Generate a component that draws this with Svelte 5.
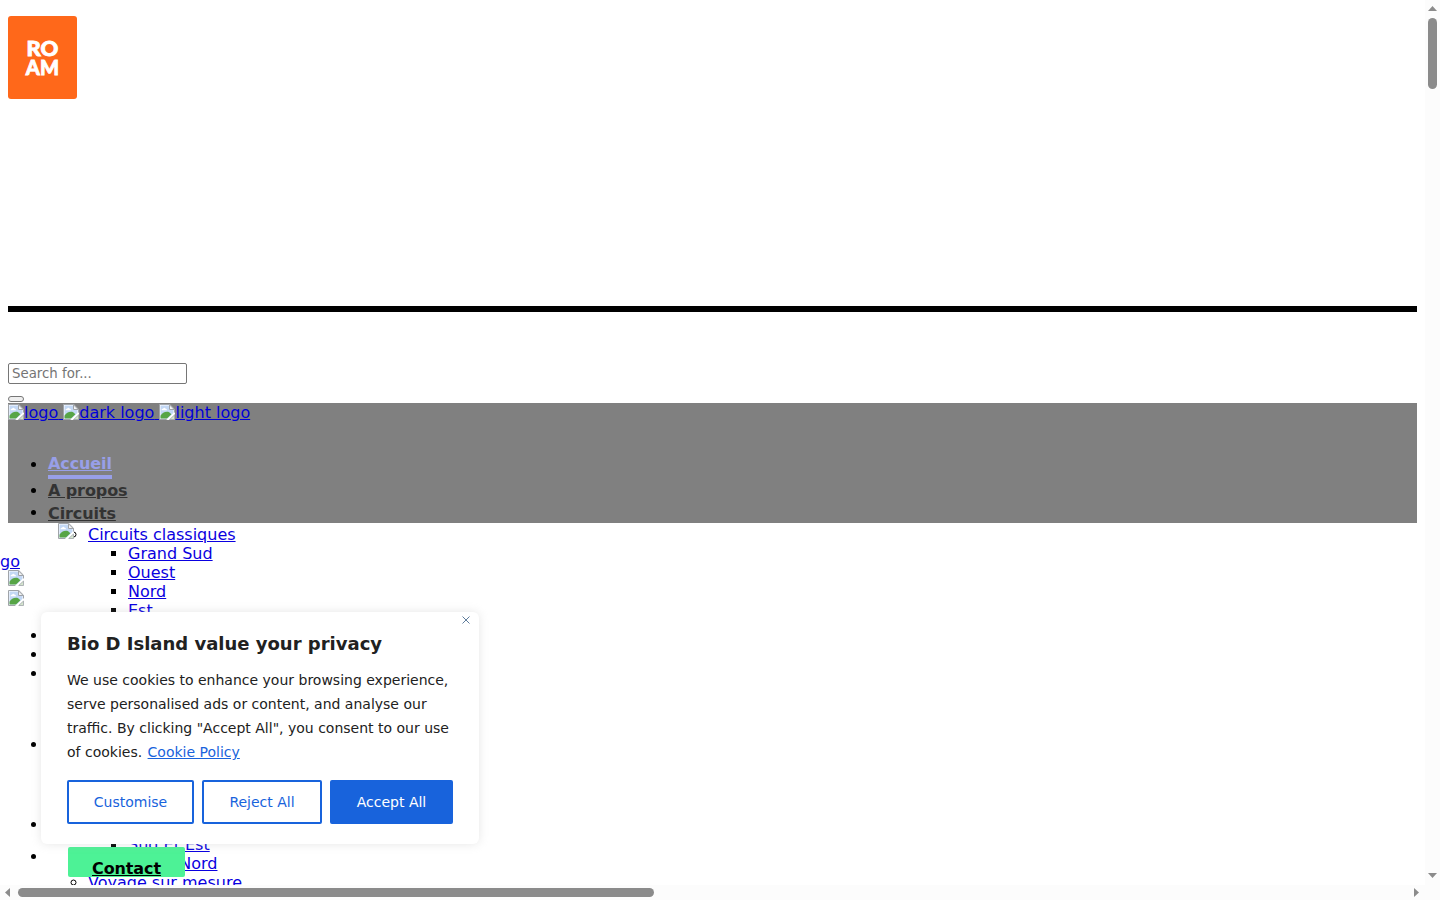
<script>
  const towns = ['Grand Sud', 'Ouest', 'Nord', 'Est'];
  const logos = ['logo', 'dark logo', 'light logo'];
  const offsets = [0, 19, 38, 109, 189, 221];
</script>

{#snippet broken()}
  <svg class="broken" width="16" height="16" viewBox="0 0 16 16" aria-hidden="true">
    <path d="M.5.5h10.3l4.7 4.7V15.5H.5z" fill="#fff" />
    <path d="M1.5 1.5h8.8v4.2h4.2v3L8.6 14.5H1.5z" fill="#c3d8f5" />
    <path d="M2.5 6.2c0-1.1.8-1.6 1.6-1.5.3-1.2 2.2-1.2 2.5.1.9 0 1.4.6 1.3 1.4z" fill="#fff" />
    <path d="M1.5 14.5v-2.8C3.4 8.6 7 7 10.2 8.3l2.2 2L8 14.5z" fill="#57a546" />
    <path d="M7.5 15.5H.5V.5h10.3l4.7 4.7v3.5" fill="none" stroke="#a0a4a9" />
    <path d="M10.5.8v4.7h4.7z" fill="#f4f5f6" stroke="#a0a4a9" />
    <path d="M7.3 16 16 8.2v1.9L9.8 16z" fill="#fff" />
    <path d="M10.7 15.5 15.5 11v4.5z" fill="#d5e6ce" stroke="#a0a4a9" stroke-width=".8" />
  </svg>
{/snippet}

<div class="screen">
  <main>
    <div class="roam"><span class="ro">RO</span><span class="am">AM</span></div>
    <div class="rule"></div>
    <input placeholder="Search for..." aria-label="Search" />
    <button class="submit" aria-label="Submit"></button>
    <header>
      <div class="logos">
        {#each logos as name, i}<a href="#top">{@render broken()}{name}{#if i < 2}&nbsp;{/if}</a>{/each}
      </div>
      <ul class="nav">
        <li class="home"><a href="#top">Accueil</a></li>
        <li class="about"><a href="#top">A propos</a></li>
        <li class="tours"><a href="#top">Circuits</a>
          <ul class="sub">
            <li><a href="#top">Circuits classiques</a>
              <ul>
                {#each towns as town}<li><a href="#top">{town}</a></li>{/each}
                <li class="later"><a href="#top">Sud Et Est</a></li>
                <li class="west"><a href="#top">Ouest Nord</a></li>
              </ul>
            </li>
            <li><a href="#top">Voyage sur mesure</a></li>
          </ul>
        </li>
      </ul>
    </header>

    <div class="float-icon">{@render broken()}</div>
    <a class="cut" href="#top">go</a>
    <div class="side-icons">{@render broken()}{@render broken()}</div>
    <div class="dots">
      {#each offsets as y}<i style="top:{y}px"></i>{/each}
    </div>
    <a class="contact" href="#top">Contact</a>

    <section class="card">
      <svg class="close" width="8" height="8" viewBox="0 0 8 8"><path d="M.5.5l7 7M7.5.5l-7 7" stroke="#5f7d9c" stroke-width="1" /></svg>
      <h2>Bio D Island value your privacy</h2>
      <p>We use cookies to enhance your browsing experience, serve personalised ads or content, and analyse our traffic. By clicking "Accept All", you consent to our use of cookies. <a href="#top">Cookie Policy</a></p>
      <div class="actions">
        <button class="b1">Customise</button>
        <button class="b2">Reject All</button>
        <button class="b3">Accept All</button>
      </div>
    </section>
  </main>
  <div class="vbar">
    <svg width="9" height="5"><path d="M0 5 4.5 0 9 5z" fill="#8b8b8b" /></svg>
    <div></div>
    <svg width="9" height="5"><path d="M0 0h9L4.5 5z" fill="#8b8b8b" /></svg>
  </div>
  <div class="hbar">
    <svg width="5" height="9"><path d="M5 0v9L0 4.5z" fill="#8b8b8b" /></svg>
    <div></div>
    <svg width="5" height="9"><path d="M0 0v9l5-4.5z" fill="#8b8b8b" /></svg>
  </div>
</div>

<style>
  :global(body) { margin: 0; background: #fff; overflow: hidden; }
  .screen {
    display: grid; grid-template: 885px 15px / 1425px 15px;
    width: 1440px; height: 900px; overflow: hidden;
    font: 16px "DejaVu Sans", sans-serif; color: #000;
  }
  main { position: relative; overflow: hidden; box-sizing: border-box; padding: 16px 8px 0; }
  a { color: #0000ee; text-decoration: underline; }
  header a { color: #0000d8; }
  .sub a, .cut { color: #0a00e0; }
  .roam {
    width: 69px; height: 83px; border-radius: 3px; background: #ff681a; color: #fff;
    display: flex; flex-direction: column; align-items: center; justify-content: center;
    font: 900 20px/19px Lato, sans-serif; -webkit-text-stroke: .8px #fff;
  }
  .ro { padding-top: 1px; transform: scaleX(1.1); }
  .am { letter-spacing: .2px; }
  .rule { height: 6px; width: 1409px; background: #000; margin-top: 207px; }
  input {
    display: block; box-sizing: border-box; width: 179px; height: 21px; margin: 51px 0 0;
    padding: 1px 3px; border: 1px solid #767676; border-radius: 2px; font: 13.333px "DejaVu Sans", sans-serif;
  }
  input::placeholder { color: #757575; }
  .submit {
    display: block; width: 16px; height: 6px; box-sizing: border-box; padding: 0; margin: 12px 0 1px;
    border: 1px solid #767676; border-radius: 3px; background: #efefef;
  }
  header { width: 1409px; height: 120px; background: #808080; }
  .logos { display: flex; height: 19px; margin-bottom: 33px; white-space: nowrap; }
  .logos .broken { vertical-align: top; margin-top: 1px; }
  .broken { display: inline-block; flex: none; }
  ul { margin: 0; padding-left: 40px; }
  .nav { list-style: disc; }
  .nav > li > a { font-weight: bold; color: #333; position: relative; letter-spacing: -.1px; }
  .nav > .home { height: 26px; }
  .nav > .home > a { color: #989fe8; display: inline-block; height: 21px; border-bottom: 4px solid #989fe8; top: -1px; }
  .nav > .about { height: 22px; }
  .nav > .tours > a { top: 1px; }
  .sub { list-style: circle; padding-top: 3px; }
  .sub ul { list-style: square; }
  .later { margin-top: 215px; }
  .west { word-spacing: -1px; }
  .float-icon { position: absolute; left: 58px; top: 523px; height: 16px; display: flex; }
  .cut { position: absolute; left: 0; top: 552px; }
  .side-icons { position: absolute; left: 8px; top: 570px; display: flex; flex-direction: column; gap: 4px; }
  .dots { position: absolute; left: 31px; top: 633px; }
  .dots i { position: absolute; width: 5px; height: 5px; border-radius: 50%; background: #000; }
  .contact {
    position: absolute; left: 68px; top: 847px; width: 117px; height: 30px; box-sizing: border-box;
    padding: 12px 0 0 24px; border-radius: 2px; background: #4df296; color: #000; font-weight: bold; letter-spacing: -.1px;
  }
  .card {
    position: absolute; left: 41px; top: 612px; width: 438px; height: 232px; box-sizing: border-box;
    padding: 20px 26px; border-radius: 6px; background: #fff; color: #212121; box-shadow: 0 0 10px #acabab4d;
  }
  .close { position: absolute; right: 9px; top: 4px; }
  h2 { margin: 0 0 12px; font: bold 18px/24px "DejaVu Sans", sans-serif; }
  p { margin: 0; font-size: 14px; line-height: 24px; }
  p a { color: #1863dc; margin-left: 1px; }
  .actions { display: flex; gap: 8px; margin-top: 16px; }
  .actions button {
    height: 44px; padding: 0; border: 2px solid #1863dc; border-radius: 2px; background: #fff;
    color: #1863dc; font: 14px "DejaVu Sans", sans-serif;
  }
  .b1 { width: 127px; }
  .b2 { width: 120px; }
  .actions .b3 { width: 123px; background: #1863dc; color: #fff; }
  .vbar {
    background: #fcfcfc; display: flex; flex-direction: column; align-items: center; padding: 6px 0 7px;
  }
  .vbar div { width: 9px; height: 71px; border-radius: 5px; background: #8b8b8b; margin: 7px 0 auto; }
  .hbar { grid-column: 1 / 3; background: #fcfcfc; display: flex; align-items: center; padding: 0 21px 0 5px; }
  .hbar div { width: 636px; height: 9px; border-radius: 5px; background: #8b8b8b; margin: 0 auto 0 8px; }
</style>
